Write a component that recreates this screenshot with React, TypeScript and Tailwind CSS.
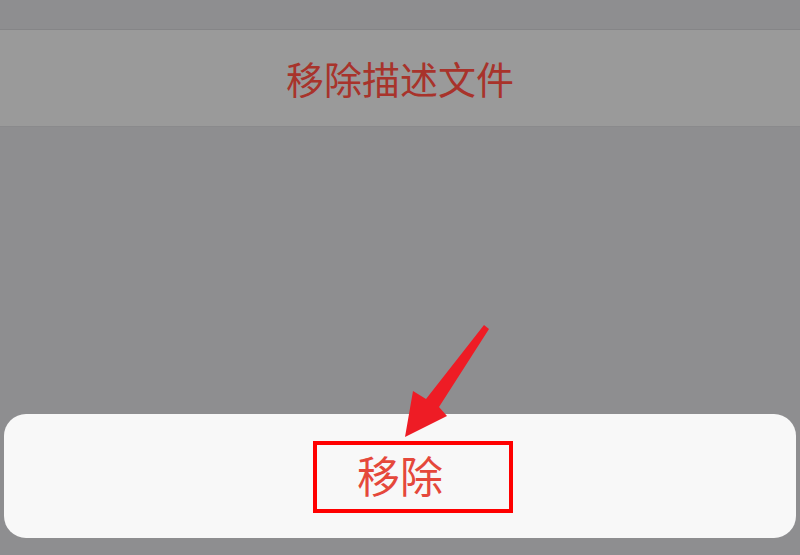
import React from 'react';

const cjk = { fontFamily: '"Noto Sans CJK SC", "Noto Sans", sans-serif' };

export default function App() {
  return (
    <div className="relative flex h-[555px] w-[800px] flex-col overflow-hidden bg-[#8e8e90]" style={cjk}>
      {/* top strip */}
      <div className="h-[30px] border-b border-[#858587]" />

      {/* action row */}
      <div className="flex h-[97px] items-center justify-center border-b border-[#8a8a8c] bg-[#9a9a9a]">
        <span className="text-[38px] leading-none tracking-[0px] text-[#a8332b]">移除描述文件</span>
      </div>

      <div className="flex-1" />

      {/* remove card */}
      <div className="relative mx-[4px] mb-[17px] flex h-[124px] items-start justify-center rounded-[22px] bg-[#f8f8f8] pt-[39px]">
        <span className="text-[43px] leading-none text-[#e5483b]">移除</span>
        <div className="absolute left-[309px] top-[27px] h-[72px] w-[200px] border-[4px] border-[#ff0000]" />
      </div>

      {/* annotation arrow */}
      <svg className="absolute left-0 top-0" width="800" height="555" viewBox="0 0 800 555">
        <polygon
          points="484,325 489,329 439,407 447,416 405,437 413,391 426,399"
          fill="#ee1c25"
        />
      </svg>
    </div>
  );
}
